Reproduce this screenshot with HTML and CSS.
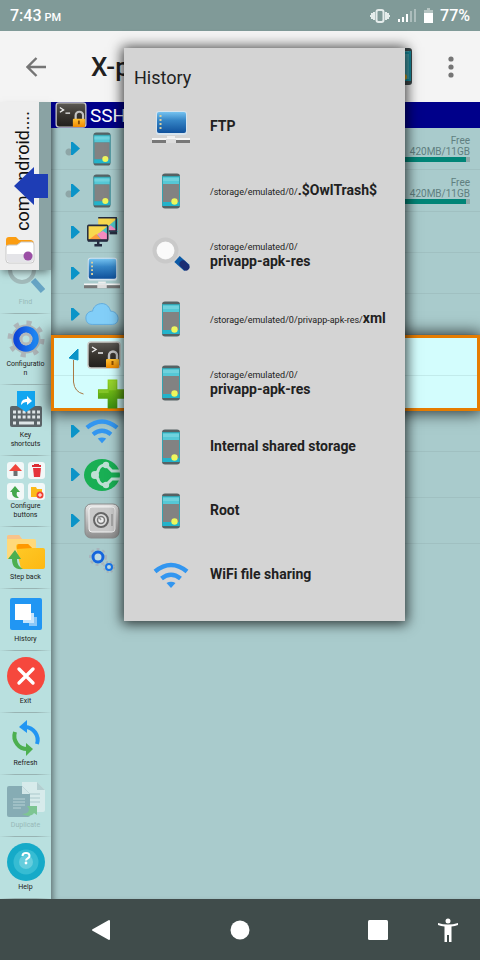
FILE: index.html
```html
<!DOCTYPE html>
<html lang="en">
<head>
<meta charset="utf-8">
<meta name="viewport" content="width=device-width, initial-scale=1">
<title>History</title>
<link rel="stylesheet" href="styles.css">
</head>
<body>
<svg class="defs" aria-hidden="true">
  <defs>
    <linearGradient id="g-blue" x1="0" y1="0" x2="0" y2="1"><stop offset="0" stop-color="#74c2f0"/><stop offset=".4" stop-color="#3585c6"/><stop offset="1" stop-color="#10519c"/></linearGradient>
    <linearGradient id="g-term" x1="0" y1="0" x2="0" y2="1"><stop offset="0" stop-color="#5d5a55"/><stop offset=".5" stop-color="#38342f"/><stop offset="1" stop-color="#211e1b"/></linearGradient>
    <linearGradient id="g-lock" x1="0" y1="0" x2="0" y2="1"><stop offset="0" stop-color="#ffc233"/><stop offset="1" stop-color="#f08a00"/></linearGradient>
    <linearGradient id="g-plus" x1="0" y1="0" x2="0" y2="1"><stop offset="0" stop-color="#8fd119"/><stop offset="1" stop-color="#3b8f10"/></linearGradient>
    <linearGradient id="g-ring" x1="0" y1="0" x2="1" y2="0"><stop offset="0" stop-color="#0d47d9"/><stop offset="1" stop-color="#1e88f5"/></linearGradient>
    <linearGradient id="g-safe" x1="0" y1="0" x2="0" y2="1"><stop offset="0" stop-color="#e8e8e8"/><stop offset=".5" stop-color="#bdbdbd"/><stop offset="1" stop-color="#8c8c8c"/></linearGradient>
    <linearGradient id="g-folder" x1="0" y1="0" x2="1" y2="1"><stop offset="0" stop-color="#ffca28"/><stop offset="1" stop-color="#fdb813"/></linearGradient>
  </defs>
  <symbol id="phone" viewBox="0 0 38 38">
    <rect x="10" y="1.500" width="18" height="35" rx="3" fill="#566264"/>
    <rect x="10" y="4" width="18" height="30" fill="#35a3b0"/>
    <rect x="11" y="5" width="16" height="7" fill="#55c8d6"/>
    <rect x="11" y="6" width="16" height="3" fill="#70d2dd"/>
    <rect x="11" y="12" width="16" height="18" fill="#828282"/>
    <rect x="11" y="30" width="16" height="4" fill="#22b3cb"/>
    <circle cx="22.500" cy="29.500" r="3.200" fill="#eef65c"/>
  </symbol>
  <symbol id="computer" viewBox="0 0 38 38">
    <rect x="4" y="3" width="31" height="24" rx="3" fill="#d7e4ee"/>
    <rect x="5" y="4" width="29" height="21" rx="2" fill="url(#g-blue)"/>
    <path d="M8.500 7v14" stroke="#d9cf9f" stroke-width="2" stroke-dasharray="2 2"/>
    <path d="M15 28h8v2H15z" fill="#eee"/>
    <path d="M0 30h38v2H0z" fill="#f4f4f4"/>
    <path d="M0 32h38v3H0z" fill="#777"/><path d="M14 31h10v4H14z" fill="#ddd"/>
  </symbol>
  <symbol id="search" viewBox="0 0 38 38">
    <path d="M25 23l10 9" stroke="#0c5aa6" stroke-width="8"/>
    <path d="M31 28l3 3" stroke="#1b2d74" stroke-width="7" stroke-linecap="round"/>
    <circle cx="13.500" cy="14.500" r="11" fill="#f5f5f5" stroke="#c9c9c9" stroke-width="4"/>
    <circle cx="13.500" cy="14.500" r="8.500" fill="#fafafa"/>
  </symbol>
  <symbol id="find" viewBox="0 0 38 38">
    <path d="M26 22l10 11" stroke="#176aaa" stroke-width="6"/>
    <circle cx="15" cy="12" r="12" fill="#d9f2f2" stroke="#8d9697" stroke-width="4"/>
  </symbol>
  <symbol id="wifi" viewBox="0 0 38 38">
    <g fill="none" stroke="#3296f0" stroke-width="4.500"><path d="M3 15.500Q19 2.500 35 15.500"/><path d="M9.500 22.500Q19 15 28.500 22.500"/></g>
    <path d="M14.500 27Q19 24.500 23.500 27L19 32z" fill="#3296f0"/>
  </symbol>
  <symbol id="terminal" viewBox="0 0 34 28">
    <rect x="1" y="1" width="32" height="26" rx="3" fill="url(#g-term)" stroke="#c9c9c5" stroke-width="1.400"/>
    <path d="M5 6l4 2.500L5 11M11 12h5" fill="none" stroke="#eee" stroke-width="1.400"/>
    <path d="M22 19v-4.500a4 4 0 0 1 8 0V19" fill="none" stroke="#c3c3c3" stroke-width="2.400"/>
    <rect x="19" y="18" width="13" height="9" rx="1" fill="url(#g-lock)"/><path d="M25.500 20v4" stroke="#8a4d00" stroke-width="2"/>
  </symbol>
  <symbol id="screens" viewBox="0 0 38 38">
    <path d="M15 4h21v15H15z" fill="#f8d84e"/><path d="M36 4v15H18z" fill="#4fc3c7"/><path d="M22 18l6-6 8 6z" fill="#f48bc0"/><path d="M15 4h19v14H24" fill="none" stroke="#252c40" stroke-width="1.600"/><path d="M27 20h8" stroke="#252c40" stroke-width="3"/>
    <path d="M4 12h22v16H4z" fill="#f8d84e"/><path d="M26 12v16H7z" fill="#4fc3c7"/><path d="M4 28l9-7 6 7z" fill="#ff9b3d"/><path d="M14 21l6-3 6 4v6h-7z" fill="#f48bc0"/>
    <rect x="4" y="12" width="21" height="16" rx="1" fill="none" stroke="#252c40" stroke-width="1.600"/><path d="M15 28v4M11 33h8M4 28h21" stroke="#252c40" stroke-width="2.600"/>
  </symbol>
  <symbol id="cloud" viewBox="0 0 38 38">
    <path d="M9 30C4 30 2 27 2 23s3-7 7-7c1-5 5-8 10-8s8 4 9 8c5 0 8 4 8 8s-3 6-6 6z" fill="#82cef8" stroke="#5fa9dc"/>
  </symbol>
  <symbol id="plus" viewBox="0 0 32 32"><path d="M11 1h10v10h10v10H21v10H11V21H1V11h10z" fill="url(#g-plus)"/><path d="M12 2h8v10H2v3h10z" fill="#a9de45" opacity=".4"/></symbol>
  <symbol id="share" viewBox="0 0 36 34">
    <ellipse cx="18" cy="17" rx="18" ry="16" fill="#19af54"/>
    <g fill="none" stroke="#bfe0d5" stroke-width="3"><path d="M36 13h-8l-5-5M36 21h-8l-5 5M22 7h-2q-5 1-6 6l-3 4 3 4q1 5 6 6h2"/></g>
    <circle cx="22" cy="7" r="3.200" fill="#bfe0d5"/><circle cx="22" cy="27" r="3.200" fill="#bfe0d5"/><circle cx="11" cy="17" r="4" fill="#bfe0d5"/>
  </symbol>
  <symbol id="safe" viewBox="0 0 36 36">
    <rect x="1" y="1" width="34" height="34" rx="6" fill="url(#g-safe)" stroke="#8b8b8b"/><rect x="5" y="4" width="26" height="25" rx="3" fill="#c9c9c9" stroke="#f3f3f3"/>
    <circle cx="17" cy="17" r="7" fill="#ddd" stroke="#666" stroke-width="2"/><circle cx="17" cy="17" r="3.500" fill="#eee" stroke="#777" stroke-width="1.500"/><path d="M14 13l3 4M28 11v12" stroke="#999" stroke-width="1.500"/>
  </symbol>
  <symbol id="gears" viewBox="0 0 26 26">
    <circle cx="9" cy="9" r="8" fill="none" stroke="#a9b4bb" stroke-width="2" stroke-dasharray="3 3"/><circle cx="9" cy="9" r="5" fill="#c0dce4" stroke="#1565dc" stroke-width="3"/>
    <circle cx="20" cy="19" r="5" fill="none" stroke="#a9b4bb" stroke-width="2" stroke-dasharray="2 2"/><circle cx="20" cy="19" r="3" fill="#c0dce4" stroke="#1976e8" stroke-width="2"/>
  </symbol>
  <symbol id="config" viewBox="0 0 38 38">
    <circle cx="19" cy="19" r="16" fill="none" stroke="#adb5b8" stroke-width="5" stroke-dasharray="5 7.560"/>
    <circle cx="19" cy="19" r="14.500" fill="#adb5b8"/><circle cx="19" cy="19" r="9.500" fill="#d3ddde" stroke="url(#g-ring)" stroke-width="6.500"/>
    <circle cx="19" cy="19" r="5" fill="#b9e0df" stroke="#b4b9ba" stroke-width="3"/>
  </symbol>
  <symbol id="keyboard" viewBox="0 0 38 38">
    <rect x="3" y="15" width="32" height="21" rx="2" fill="#5c6569"/>
    <path d="M6 21h27M6 26h27" stroke="#dfe6e8" stroke-width="3" stroke-dasharray="3 1.800"/><path d="M12 32h15M6 32h3M30 32h3" stroke="#dfe6e8" stroke-width="3"/>
    <path d="M10 0h18v15l-9 6-9-6z" fill="#12a6f0"/><path d="M14 14c0-4 2-6 6-6V5l5 5-5 4v-3c-3 0-4 1-6 3z" fill="#fff"/>
  </symbol>
  <symbol id="buttons" viewBox="0 0 38 38">
    <g fill="#f2f8f8"><rect width="17" height="17" rx="3"/><rect x="21" width="17" height="17" rx="3"/><rect y="21" width="17" height="17" rx="3"/><rect x="21" y="21" width="17" height="17" rx="3"/></g>
    <path d="M8.500 2l6.500 7H2z" fill="#f0453c"/><path d="M6.500 9h4v5h-4z" fill="#6b6f71"/>
    <path d="M25 4h9M27 3h5" stroke="#dc2d35" stroke-width="2"/><path d="M26 6h8l-1 9h-6z" fill="#e5343c"/>
    <path d="M8 24l5 6h-3c-1 3 0 4 2 6-5 0-7-2-7-6H3z" fill="#43a84c"/>
    <path d="M24 25h5l1 2h5v8H24z" fill="#fcba19"/><circle cx="33" cy="33" r="3.500" fill="#ef4136"/><path d="M31 33h4M33 31v4" stroke="#fff"/>
  </symbol>
  <symbol id="stepback" viewBox="0 0 38 38">
    <path d="M0 8V4q0-2 2-2h10l3 4h12q2 0 2 2v18H0z" fill="#ffd97b"/><path d="M0 6V4q0-2 2-2h10l3 4z" fill="#f8c38c"/>
    <path d="M9 14q0-3 2-3h10l4 4h11q2 0 2 2v17q0 2-2 2H14z" fill="url(#g-folder)"/><path d="M10 16v-2q0-3 2-3h9l4 4z" fill="#ff9800"/>
    <path d="M8 17l6 9h-4c0 5 2 8 6 10-8 1-11-3-11-10H1z" fill="#4caf50"/>
  </symbol>
  <symbol id="history" viewBox="0 0 38 38"><rect x="3" y="3" width="32" height="32" rx="2" fill="#2196f3"/><path d="M22 22h8v9h-8z" fill="#8ac7f8"/><path d="M16 18h11v10H16z" fill="#c8e5fc"/><path d="M8 9h16v16H8z" fill="#fff"/></symbol>
  <symbol id="exit" viewBox="0 0 38 38"><circle cx="19" cy="19" r="19" fill="#f6483d"/><path d="M12 12l14 14M26 12L12 26" stroke="#fff" stroke-width="3.400" stroke-linecap="round"/></symbol>
  <symbol id="refresh" viewBox="0 0 38 38">
    <path d="M18 8a13 13 0 0 1 12 17" fill="none" stroke="#2196f3" stroke-width="4"/><path d="M12 8l8-7v13z" fill="#2196f3"/>
    <path d="M8 13a13 13 0 0 0 13 17" fill="none" stroke="#4caf50" stroke-width="4"/><path d="M26 30l-7-6v13z" fill="#4caf50"/>
  </symbol>
  <symbol id="duplicate" viewBox="0 0 38 38">
    <path d="M15 1h15l8 8v20q0 2-2 2H17q-2 0-2-2z" fill="#f5f7f8"/><path d="M30 1v8h8z" fill="#aebfc4"/><path d="M21 13h12M21 17h12M21 21h12" stroke="#9eb4bb"/>
    <path d="M0 7q0-2 2-2h13l8 8v21q0 2-2 2H2q-2 0-2-2z" fill="#55798a"/><path d="M15 5l8 8h-8z" fill="#eceff1"/><path d="M6 18h12M6 21h12M6 24h12M6 27h8" stroke="#b9c9d0"/>
    <path d="M15 33c6 0 7-3 7-5l-2-3h10v9l-3-2c-2 3-6 4-12 1z" fill="#43ab48"/>
  </symbol>
  <symbol id="help" viewBox="0 0 38 38"><circle cx="19" cy="19" r="19" fill="#15aac8"/><circle cx="19" cy="19" r="12.500" fill="#36bcd3"/><circle cx="19" cy="19" r="7" fill="#65cddd"/><path d="M15.500 13q0-3 3.500-3t3.500 3q0 1.500-2 2.500-1.500 1-1.500 2" fill="none" stroke="#fff" stroke-width="2"/><circle cx="19" cy="20" r="1.400" fill="#fff"/></symbol>
</svg>

<div class="screen">
  <header class="status">
    <span class="clock">7:43<small>PM</small></span>
    <span class="status-icons">
      <svg width="20" height="16" viewBox="0 0 20 16" fill="none" stroke="#e5eceb" stroke-width="2"><rect x="6.500" y="2" width="7" height="12" rx="2"/><path d="M4 4v8M2 5v6M16 4v8M18 5v6M0 7v2M20 7v2"/></svg>
      <svg width="18" height="13" viewBox="0 0 18 13" fill="#fff"><path d="M0 10h2v3H0zM4 8h2v5H4zM8 5h2v8H8z"/><path d="M12 2h2v11h-2zM16 0h2v13h-2z" opacity=".35"/></svg>
      <svg width="9" height="15" viewBox="0 0 9 15"><path d="M0 2h3V0h3v2h3v3H0z" fill="#b5c4c2"/><path d="M0 5h9v10H0z" fill="#fff"/></svg>
    </span>
    <span class="battery">77%</span>
  </header>

  <div class="appbar">
    <button class="icon-button" aria-label="Back"><svg width="20" height="20" viewBox="0 0 20 20" fill="none" stroke="#757575" stroke-width="2.400"><path d="M20 10H2M10.500 1L1.500 10l9 9"/></svg></button>
    <h1>X-p</h1>
    <svg class="appbar-phone" width="38" height="38" viewBox="0 0 38 38"><rect x="12" y="0" width="21" height="37" rx="3" fill="#3e484a"/><path d="M13 3h18v30H13z" fill="#45a2ae"/><path d="M13 5h18M13 32h18M31 3v30" stroke="#168da0" stroke-width="2"/><circle cx="25" cy="29" r="3" fill="#d9a51b"/></svg>
    <button class="icon-button" aria-label="More options"><svg width="6" height="22" viewBox="0 0 6 22" fill="#757575"><circle cx="3" cy="3" r="2.600"/><circle cx="3" cy="11" r="2.600"/><circle cx="3" cy="19" r="2.600"/></svg></button>
  </div>

  <main class="main">
    <nav class="tools" aria-label="Tools">
      <button class="tool" disabled><svg><use href="#find"/></svg><span>Find</span></button>
      <button class="tool"><svg><use href="#config"/></svg><span>Configuratio<br>n</span></button>
      <button class="tool"><svg><use href="#keyboard"/></svg><span>Key<br>shortcuts</span></button>
      <button class="tool"><svg><use href="#buttons"/></svg><span>Configure<br>buttons</span></button>
      <button class="tool"><svg><use href="#stepback"/></svg><span>Step back</span></button>
      <button class="tool"><svg><use href="#history"/></svg><span>History</span></button>
      <button class="tool"><svg><use href="#exit"/></svg><span>Exit</span></button>
      <button class="tool"><svg><use href="#refresh"/></svg><span>Refresh</span></button>
      <button class="tool" disabled><svg><use href="#duplicate"/></svg><span>Duplicate</span></button>
      <button class="tool"><svg><use href="#help"/></svg><span>Help</span></button>
    </nav>

    <section class="pane">
      <h2 class="pane-title"><svg width="32" height="26"><use href="#terminal"/></svg>SSH</h2>
      <ul class="tree">
        <li class="row storage"><i class="caret dot"></i><svg class="row-icon"><use href="#phone"/></svg><div class="space">Free<br>420MB/11GB<div class="meter"></div></div></li>
        <li class="row storage"><i class="caret dot"></i><svg class="row-icon"><use href="#phone"/></svg><div class="space">Free<br>420MB/11GB<div class="meter"></div></div></li>
        <li class="row"><i class="caret"></i><svg class="row-icon"><use href="#screens"/></svg></li>
        <li class="row"><i class="caret"></i><svg class="row-icon"><use href="#computer"/></svg></li>
        <li class="row"><i class="caret"></i><svg class="row-icon"><use href="#cloud"/></svg></li>
        <li class="selected">
          <svg class="branch" width="18" height="48" viewBox="0 0 18 48"><path d="M0 9L9 0v11z" fill="#0b94c8" stroke="#0b94c8" stroke-linejoin="round"/><path d="M4.500 11v22q1 10 10 12" fill="none" stroke="#a87844"/></svg>
          <div class="selected-items"><svg width="34" height="28"><use href="#terminal"/></svg><svg class="add" width="31" height="32"><use href="#plus"/></svg></div>
        </li>
        <li class="row"><i class="caret"></i><svg class="row-icon"><use href="#wifi"/></svg></li>
        <li class="row tall"><i class="caret"></i><svg class="row-icon"><use href="#share"/></svg></li>
        <li class="row tall"><i class="caret"></i><svg class="row-icon"><use href="#safe"/></svg></li>
        <li class="row last"><svg width="26" height="26"><use href="#gears"/></svg></li>
      </ul>
    </section>

    <aside class="drawer">
      <div class="drawer-tab">
        <span class="drawer-label">com.android....</span>
        <svg width="30" height="27" viewBox="0 0 30 27"><path d="M1 3q0-3 3-3h7l3 3h11q4 0 4 4v3H1z" fill="#fb9d12"/><path d="M1 10q0-2 3-2h8l4-3h11q2 0 2 3v15q0 3-3 3H4q-3 0-3-3z" fill="#fff" stroke="#c9c9c9"/><path d="M2 17h26v6q0 2-2 2H4q-2 0-2-2z" fill="#e4e4e8"/><circle cx="23" cy="19" r="4.500" fill="#9b4fa5"/></svg>
      </div>
      <svg class="drawer-arrow" width="34" height="38" viewBox="0 0 34 38"><path d="M0 19L20 0v7h14v24H20v7z" fill="#1e3db5"/></svg>
    </aside>
  </main>

  <footer class="navbar">
    <div class="nav-main">
      <button class="icon-button" aria-label="Back"><svg width="22" height="22" viewBox="0 0 22 22"><path d="M3 11L19 2v18z" fill="#fff" stroke="#fff" stroke-width="2" stroke-linejoin="round"/></svg></button>
      <button class="icon-button" aria-label="Home"><svg width="22" height="22" viewBox="0 0 22 22"><circle cx="11" cy="11" r="9.500" fill="#fff"/></svg></button>
      <button class="icon-button" aria-label="Recent apps"><svg width="22" height="22" viewBox="0 0 22 22"><rect x="1" y="1" width="20" height="20" rx="1.500" fill="#fff"/></svg></button>
    </div>
    <button class="icon-button" aria-label="Accessibility"><svg width="22" height="24" viewBox="0 0 22 24" fill="#fff"><circle cx="11" cy="3" r="2.500"/><path d="M1 5q10 3 20 0v2q-3 1-6.500 1.500V24h-2.500v-7h-2v7H7.500V8.500Q4 8 1 7z"/></svg></button>
  </footer>

  <section class="dialog" role="dialog" aria-labelledby="dialog-title">
    <h2 id="dialog-title">History</h2>
    <button class="entry"><svg><use href="#computer"/></svg><span><b>FTP</b></span></button>
    <button class="entry"><svg><use href="#phone"/></svg><span>/storage/emulated/0/<b>.$OwlTrash$</b></span></button>
    <button class="entry"><svg><use href="#search"/></svg><span>/storage/emulated/0/<br><b>privapp-apk-res</b></span></button>
    <button class="entry"><svg><use href="#phone"/></svg><span>/storage/emulated/0/privapp-apk-res/<b>xml</b></span></button>
    <button class="entry"><svg><use href="#phone"/></svg><span>/storage/emulated/0/<br><b>privapp-apk-res</b></span></button>
    <button class="entry"><svg><use href="#phone"/></svg><span><b>Internal shared storage</b></span></button>
    <button class="entry"><svg><use href="#phone"/></svg><span><b>Root</b></span></button>
    <button class="entry"><svg><use href="#wifi"/></svg><span><b>WiFi file sharing</b></span></button>
  </section>
</div>
</body>
</html>
```
FILE: styles.css
```css
* { box-sizing: border-box; }
body { margin: 0; font-family: Roboto, "Liberation Sans", sans-serif; color: #212121; }
h1, h2, ul { margin: 0; padding: 0; font-weight: 400; list-style: none; }
button { margin: 0; padding: 0; border: 0; background: none; font: inherit; color: inherit; }
svg { display: block; flex: none; }
.defs { position: absolute; width: 0; height: 0; }

.screen { position: relative; display: flex; flex-direction: column; height: 100vh; overflow: hidden; }

.status { display: flex; align-items: center; flex: none; height: 31px; padding: 0 10px; background: #809a98; color: #fff; font-size: 16px; font-weight: 500; }
.clock { display: flex; flex: 1; align-items: baseline; gap: 3px; }
.clock small { font-size: 11px; }
.status-icons { display: flex; align-items: center; gap: 8px; margin-right: 7px; }

.appbar { display: flex; align-items: center; flex: none; height: 71px; padding: 0 26px; background: #f4f4f4; }
.appbar h1 { flex: 1; margin-left: 45px; font-size: 26px; font-weight: 500; }
.appbar-phone { margin-right: 31px; }

.main { position: relative; display: flex; flex: 1; min-height: 0; background: #a9cbcc; }
.tools { display: flex; flex-direction: column; justify-content: flex-end; flex: none; width: 51px; overflow: hidden; background: #b9e0df; }
.tool { display: flex; flex-direction: column; align-items: center; flex: none; padding: 6px 0 6px; font-size: 7px; line-height: 9px; text-align: center;
  border-bottom: 1px solid; border-image: linear-gradient(90deg, #b9e0df, #98b3b2 30%, #98b3b2 70%, #b9e0df) 1; }
.tool svg { width: 38px; height: 38px; margin-bottom: 2px; }
.tool:disabled { color: #98b9b8; }
.tool:disabled svg { opacity: .5; }

.pane { flex: 1; min-width: 0; box-shadow: inset 6px 0 6px -4px rgba(0, 0, 0, .45); }
.pane-title { display: flex; align-items: center; gap: 3px; height: 26px; padding-left: 4px; background: #00008a; color: #fff; font-size: 19px; }
.row { display: flex; align-items: center; height: 41px; padding-left: 20px; border-bottom: 1px solid rgba(0, 0, 0, .05); }
.storage { height: 42px; }
.tall { height: 46px; }
.last { height: 33px; border: 0; padding-left: 38px; }
.row-icon { width: 36px; height: 36px; margin-left: 4px; }
.caret { width: 9px; height: 13px; background: #0b94c8; clip-path: polygon(0 0, 20% 0, 100% 50%, 20% 100%, 0 100%); }
.caret.dot { width: 15px; height: 17px; padding-top: 2px; margin-left: -6px; clip-path: none; background: radial-gradient(circle at 4px 12px, #8ea6a7 3px, transparent 4px); }
.caret.dot::after { content: ""; display: block; width: 9px; height: 13px; margin-left: 6px; background: #0b94c8; clip-path: polygon(0 0, 20% 0, 100% 50%, 20% 100%, 0 100%); }
.space { margin-left: auto; width: 120px; padding-right: 10px; font-size: 10px; line-height: 11px; text-align: right; color: #607f80; }
.meter { height: 5px; background: linear-gradient(90deg, #008577 96%, #8fa8a8 96%); }
.selected { display: flex; height: 76px; padding: 0 15px; border: 3px solid #e67c00; background: linear-gradient(#c2ebeb, #c2ebeb) 0 37px / 100% 1px no-repeat #d3fdfd; box-shadow: 0 0 15px 2px rgba(0, 0, 0, .75); }
.branch { margin-top: 11px; }
.selected-items { flex: 1; padding-top: 3px; }
.add { margin: 9px 0 0 10px; }

.drawer { position: absolute; top: 0; left: 0; width: 51px; height: 168px; background: #8aa3a4; box-shadow: 0 4px 8px -2px rgba(0, 0, 0, .5); }
.drawer-tab { display: flex; flex-direction: column; align-items: center; justify-content: space-between; width: 39px; height: 100%; padding: 9px 0 6px; background: #eee; }
.drawer-label { writing-mode: vertical-rl; transform: rotate(180deg); margin-left: 6px; font-size: 18px; line-height: 20px; color: #111; }
.drawer-arrow { position: absolute; top: 65px; left: 14px; }

.navbar { display: flex; align-items: center; gap: 48px; flex: none; height: 61px; padding: 0 21px 0 90px; background: #404c4b; }
.nav-main { display: flex; flex: 1; justify-content: space-between; }

.dialog { position: absolute; top: 48px; left: 124px; right: 75px; padding: 16px 10px 15px; background: #d4d4d4; box-shadow: 0 1px 12px 2px rgba(0, 0, 0, .75); }
.dialog h2 { height: 30px; font-size: 18px; line-height: 28px; }
.entry { display: flex; align-items: center; gap: 20px; width: 100%; height: 64px; padding: 1px 0 0 18px; text-align: left; font-size: 9px; line-height: 14px; white-space: nowrap; }
.entry svg { width: 38px; height: 38px; }
.entry b { font-size: 14px; font-weight: 700; }
```
